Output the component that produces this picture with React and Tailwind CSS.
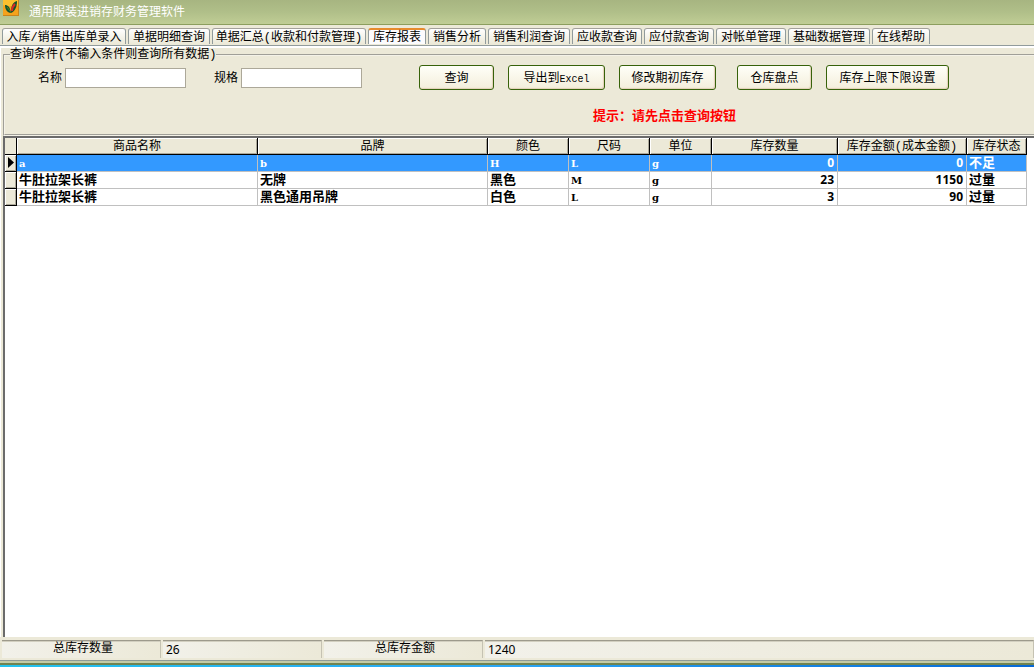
import { useState } from 'react'
import clsx from 'clsx'

const tabs = [
  { label: '入库/销售出库单录入', width: 'w-[124px]' },
  { label: '单据明细查询', width: 'w-[82px]' },
  { label: '单据汇总(收款和付款管理)', width: 'w-[154px]' },
  { label: '库存报表', width: 'w-[58px]' },
  { label: '销售分析', width: 'w-[58px]' },
  { label: '销售利润查询', width: 'w-[82px]' },
  { label: '应收款查询', width: 'w-[70px]' },
  { label: '应付款查询', width: 'w-[70px]' },
  { label: '对帐单管理', width: 'w-[70px]' },
  { label: '基础数据管理', width: 'w-[82px]' },
  { label: '在线帮助', width: 'w-[58px]' },
]

const columns = [
  { key: 'name', label: '商品名称', width: 'w-[241px]' },
  { key: 'brand', label: '品牌', width: 'w-[230px]' },
  { key: 'color', label: '颜色', width: 'w-[81px]' },
  { key: 'size', label: '尺码', width: 'w-[81px]' },
  { key: 'unit', label: '单位', width: 'w-[62px]' },
  { key: 'qty', label: '库存数量', width: 'w-[126px]', numeric: true },
  { key: 'amount', label: '库存金额(成本金额)', width: 'w-[129px]', numeric: true },
  { key: 'status', label: '库存状态', width: 'w-[60px]' },
]

const rows = [
  { name: 'a', brand: 'b', color: 'H', size: 'L', unit: 'g', qty: 0, amount: 0, status: '不足' },
  { name: '牛肚拉架长裤', brand: '无牌', color: '黑色', size: 'M', unit: 'g', qty: 23, amount: 1150, status: '过量' },
  { name: '牛肚拉架长裤', brand: '黑色通用吊牌', color: '白色', size: 'L', unit: 'g', qty: 3, amount: 90, status: '过量' },
]

function Logo() {
  return (
    <svg width="16" height="16" viewBox="0 0 16 16" aria-hidden="true">
      <rect width="16" height="16" fill="#f5a21c" />
      <path d="M0 0h16v6C10 4 5 8 0 5z" fill="#fbc02d" />
      <path d="M0 15.5h16M15.5 0v16" stroke="#c9841c" />
      <path d="M2 5c3 0 5 2 6 8C4 13 2 9 2 5z" fill="#14532d" />
      <path d="M14 1c-4 1-6 4-6 12 4-2 6-6 6-12z" fill="#14532d" />
      <path d="M12 4c-2 2-3 4-3 7" stroke="#dc2626" strokeWidth="2" fill="none" />
      <path d="M4 7l3 4" stroke="#4d8b1f" fill="none" />
    </svg>
  )
}

function Tab({ tab, active, onClick }) {
  return (
    <button
      role="tab"
      aria-selected={active}
      onClick={onClick}
      className={clsx(
        'flex h-4 shrink-0 items-center justify-center whitespace-nowrap rounded-t-[3px] border-x border-x-[#919b9c] pt-0.5 leading-4',
        tab.width,
        active
          ? 'border-t-2 border-t-[#e68b2c] bg-[#fcfcfe]'
          : 'border-t border-t-[#a3a09a] bg-linear-to-b from-white to-[#ece9d8]'
      )}
    >
      {tab.label}
    </button>
  )
}

function Button({ className, children }) {
  return (
    <button
      className={clsx(
        'h-[25px] shrink-0 whitespace-nowrap rounded-[3px] border border-[#37620a] bg-linear-to-b from-[#fffff8] to-[#f3eedb] pt-0.5 shadow-[inset_-1px_-1px_1px_#e3d0b8] active:bg-[#e6e2cc]',
        className
      )}
    >
      {children}
    </button>
  )
}

function Field({ id, label }) {
  return (
    <div className="flex shrink-0 items-center gap-[3px]">
      <label htmlFor={id} className="pt-0.5">{label}</label>
      <input id={id} type="text" className="h-5 w-[121px] border border-[#aca899] bg-white px-1 outline-none" />
    </div>
  )
}

function StockTable() {
  const [selected, setSelected] = useState(0)

  return (
    <table className="w-[1022px] table-fixed border-separate border-spacing-0">
      <thead>
        <tr className="h-[17px]">
          <th className="w-3 border-b border-r border-black bg-[#ece9d8] p-0" />
          {columns.map(c => (
            <th
              key={c.key}
              className={clsx(
                'h-[17px] overflow-hidden whitespace-nowrap border-b border-r border-black bg-[#ece9d8] p-0 pt-0.5 font-normal leading-[14px] shadow-[inset_1px_1px_0_#fff,inset_-1px_-1px_0_#aca899]',
                c.width
              )}
            >
              {c.label}
            </th>
          ))}
        </tr>
      </thead>
      <tbody className="text-[13px] font-bold">
        {rows.map((row, i) => (
          <tr
            key={i}
            onClick={() => setSelected(i)}
            className={clsx('h-[17px]', i === selected ? 'bg-[#3399ff] text-white' : 'bg-white text-black')}
          >
            <td className="h-[17px] border-b border-r border-black bg-[#ece9d8] p-0 shadow-[inset_1px_1px_0_#fff,inset_-1px_-1px_0_#aca899]">
              {i === selected && (
                <svg width="10" height="14" viewBox="0 0 10 14" className="block" aria-hidden="true">
                  <path d="M3 1v11l6-5.5z" fill="#000" />
                </svg>
              )}
            </td>
            {columns.map(c => (
              <td
                key={c.key}
                className={clsx(
                  'h-[17px] overflow-hidden whitespace-nowrap border-b border-r border-[#c0c0c0] pb-0',
                  c.numeric
                    ? "pl-0.5 pr-[3px] pt-0 text-right font-['Open_Sans',sans-serif] text-xs leading-4"
                    : 'px-0.5 pt-0.5 leading-[14px]'
                )}
              >
                {c.numeric || row[c.key].charCodeAt(0) > 255 ? (
                  row[c.key]
                ) : (
                  <span className="font-['DejaVu_Serif',serif] text-[10px]">{row[c.key]}</span>
                )}
              </td>
            ))}
          </tr>
        ))}
      </tbody>
    </table>
  )
}

function StatusCell({ className, children }) {
  return (
    <div
      className={clsx(
        'h-[18px] border-r border-t border-r-[#c5c2b2] border-t-[#9d9a8c] bg-linear-to-r from-[#f2f1ea] to-[#ece9d8] leading-[17px] shadow-[inset_0_1px_0_#d2cfc0]',
        className
      )}
    >
      {children}
    </div>
  )
}

export default function App() {
  const [active, setActive] = useState(3)

  return (
    <div className="flex min-h-screen flex-col overflow-hidden bg-[#ece9d8] font-['Liberation_Mono','Noto_Sans_CJK_SC',monospace] text-xs text-black">
      {/* Title bar */}
      <header className="flex h-[25px] items-start gap-2.5 border-b border-[#8c9e5e] bg-linear-to-b from-[#a7b581] via-[#b0bf89] to-[#c0cd95] px-[3px]">
        <Logo />
        <h1 className="pt-1 leading-[18px] text-white">通用服装进销存财务管理软件</h1>
      </header>

      <nav role="tablist" className="flex gap-0.5 border-b border-[#919b9c] px-0.5 pb-px pt-[3px]">
        {tabs.map((tab, i) => (
          <Tab key={tab.label} tab={tab} active={i === active} onClick={() => setActive(i)} />
        ))}
      </nav>
      <div className="h-0.5 bg-white" />

      <main className="flex flex-1 flex-col border-l border-white pl-0.5">
        {/* Query conditions */}
        <fieldset className="-mr-1 h-[88px] border-2 border-[#f4f2e8] pl-[33px] [border-style:groove]">
          <legend className="-ml-7 leading-[14px]">查询条件(不输入条件则查询所有数据)</legend>
          <div className="flex items-center pt-[3px]">
            <Field id="name" label="名称" />
            <div className="ml-7">
              <Field id="spec" label="规格" />
            </div>
            <div className="ml-[57px] flex gap-3.5">
              <Button className="w-[75px]">查询</Button>
              <Button className="w-[97px]">
                导出到<span className="text-[10px]">Excel</span>
              </Button>
              <Button className="w-[97px]">修改期初库存</Button>
            </div>
            <div className="ml-[21px] flex gap-3.5">
              <Button className="w-[75px]">仓库盘点</Button>
              <Button className="w-[123px]">库存上限下限设置</Button>
            </div>
          </div>
          <p className="ml-[555px] mt-[18px] text-[13px] font-bold leading-[18px] text-[#ff0000]">
            提示：请先点击查询按钮
          </p>
        </fieldset>

        {/* Stock list */}
        <section className="flex-1 overflow-hidden border-l-2 border-t-2 border-[#6b6b6b] bg-white">
          <StockTable />
        </section>
      </main>

      <footer>
        <div className="flex gap-0.5 border-b border-[#8f9a96] pb-0.5 pl-0.5 pt-[3px]">
          <StatusCell className="w-[159px] pl-1 text-center">总库存数量</StatusCell>
          <StatusCell className="w-[159px] pl-[3px] font-['Noto_Sans',sans-serif]">26</StatusCell>
          <StatusCell className="w-[159px] pl-1 text-center">总库存金额</StatusCell>
          <StatusCell className="flex-1 pl-[3px] font-['Noto_Sans',sans-serif]">1240</StatusCell>
        </div>
        <div className="h-1 border-b-2 border-[#6f8350] bg-[#c3cba6]" />
        <div className="h-0.5 bg-linear-to-r from-[#22c3ee] via-[#2ba6f5] to-[#0668d6]" />
      </footer>
    </div>
  )
}
